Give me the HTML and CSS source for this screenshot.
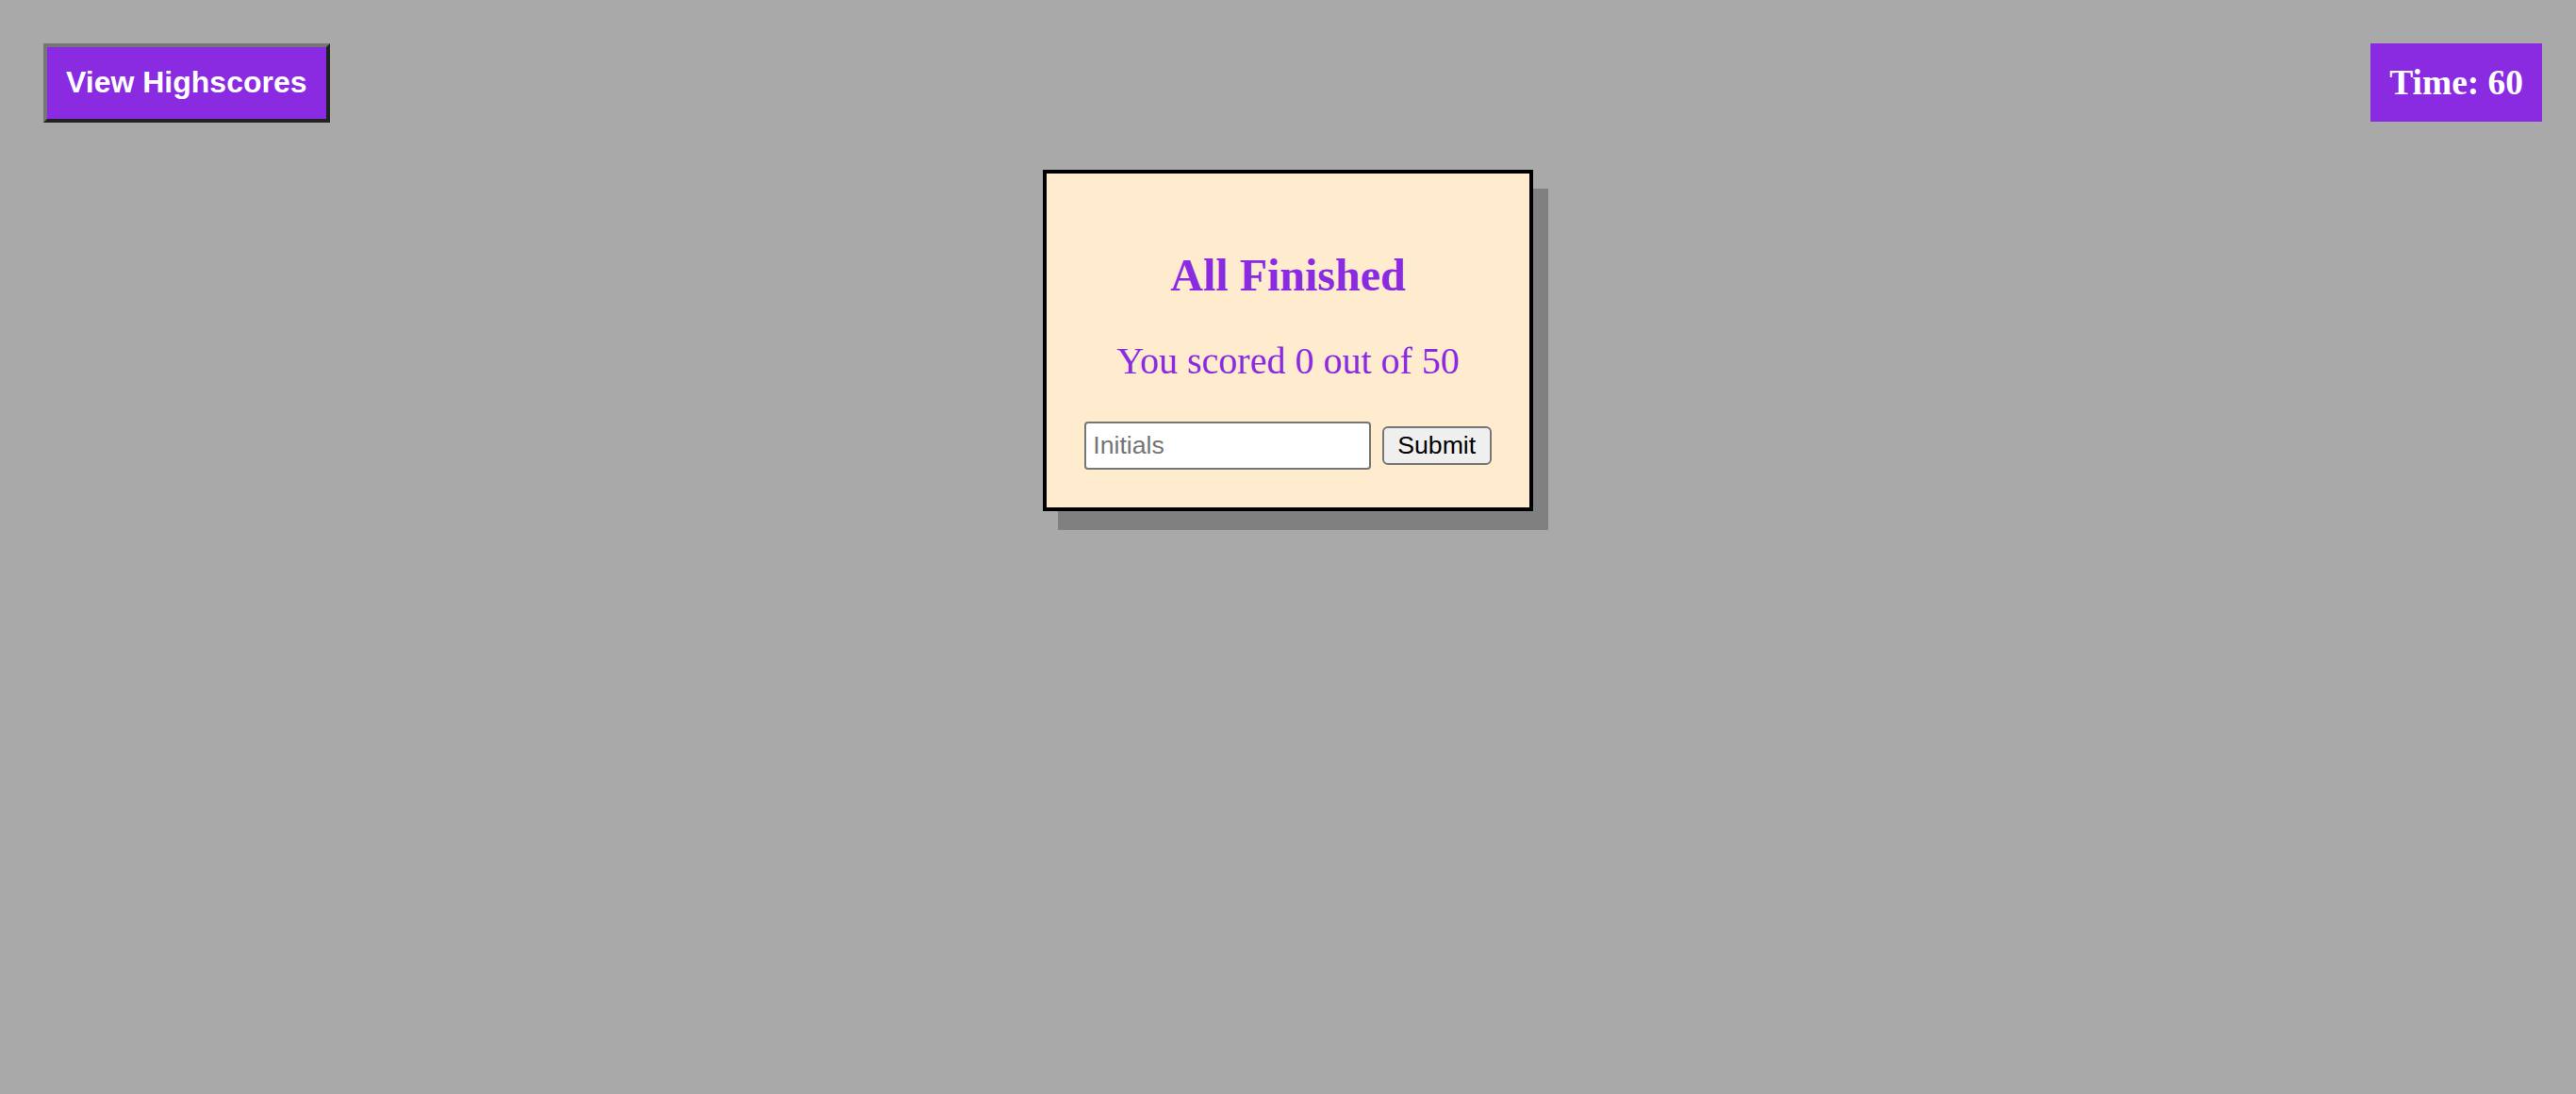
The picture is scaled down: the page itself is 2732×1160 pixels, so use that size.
FILE: index.html
```html
<!DOCTYPE html>
<html lang="en">
<head>
<meta charset="utf-8">
<title>Code Quiz</title>
<link rel="stylesheet" href="styles.css">
</head>
<body>
<header class="top-bar">
  <button class="highscores-btn" type="button">View Highscores</button>
  <h3 class="timer">Time: 60</h3>
</header>
<main class="stage">
  <section class="card">
    <h2 class="card-title">All Finished</h2>
    <p class="card-score">You scored 0 out of 50</p>
    <form class="card-form">
      <input class="initials-input" type="text" placeholder="Initials"> <button class="submit-btn" type="button">Submit</button>
    </form>
  </section>
</main>
</body>
</html>
```

FILE: styles.css
```css
html, body {
  margin: 0;
  padding: 0;
}

body {
  background: #a9a9a9;
  min-height: 1160px;
  font-family: "Liberation Serif", "Times New Roman", serif;
}

.top-bar {
  display: flex;
  justify-content: space-between;
  align-items: flex-start;
  padding: 46px 36px 0 46px;
}

.highscores-btn {
  font-family: "Liberation Sans", Arial, sans-serif;
  font-weight: bold;
  font-size: 32px;
  line-height: 37px;
  color: #ffffff;
  background: #8a2be2;
  padding: 19px 20px 20px 20px;
  border-style: solid;
  border-width: 4px;
  border-color: #767676 #222222 #222222 #767676;
  margin: 0;
  cursor: pointer;
}

.timer {
  margin: 0;
  font-family: "Liberation Serif", "Times New Roman", serif;
  font-weight: bold;
  font-size: 37.44px;
  line-height: 43px;
  color: #ffffff;
  background: #8a2be2;
  padding: 20px 20px;
}

.stage {
  display: flex;
  justify-content: center;
  margin-top: 50px;
}

.card {
  box-sizing: border-box;
  width: 520px;
  background: #ffebcd;
  border: 4px solid #000000;
  box-shadow: 16px 20px 0 #808080;
  padding: 40px 40px 40px;
  text-align: center;
  color: #8a2be2;
}

.card-title {
  margin: 40px 0;
  font-size: 48px;
  font-weight: bold;
}

.card-score {
  margin: 40px 0 41px;
  font-size: 40px;
}

.card-form {
  margin: 0;
  font-family: "Liberation Sans", Arial, sans-serif;
  font-size: 26.67px;
}

.initials-input {
  box-sizing: border-box;
  width: 304px;
  height: 51px;
  padding: 2px 7px;
  border: 2px solid #767676;
  border-radius: 4px;
  background: #ffffff;
  font-family: "Liberation Sans", Arial, sans-serif;
  font-size: 26.67px;
  color: #000000;
  vertical-align: baseline;
}

.initials-input::placeholder {
  color: #757575;
}

.submit-btn {
  box-sizing: border-box;
  width: 116px;
  height: 41px;
  padding: 2px 12px;
  border: 2px solid #767676;
  border-radius: 6px;
  background: #efefef;
  font-family: "Liberation Sans", Arial, sans-serif;
  font-size: 26.67px;
  color: #000000;
  margin-left: 4px;
}
```
